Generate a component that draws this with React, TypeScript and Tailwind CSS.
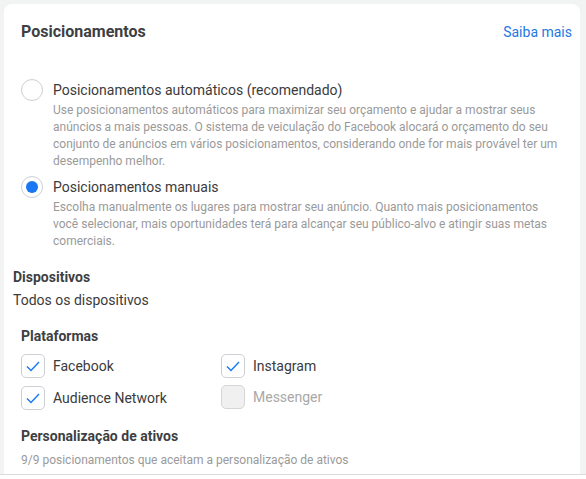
import { useState } from "react";

const platforms = [
  { name: "Facebook", checked: true, disabled: false },
  { name: "Instagram", checked: true, disabled: false },
  { name: "Audience Network", checked: true, disabled: false },
  { name: "Messenger", checked: false, disabled: true }
];

function Radio({ selected }: { selected: boolean }) {
  return (
    <span className="flex h-[22px] w-[22px] shrink-0 items-center justify-center rounded-full border border-[#ccd0d5] bg-white">
      {selected ? <span className="h-3 w-3 rounded-full bg-[#1877f2]" /> : null}
    </span>
  );
}

function Checkbox({ checked, disabled }: { checked: boolean; disabled: boolean }) {
  return (
    <span
      className={`flex h-6 w-6 shrink-0 items-center justify-center rounded-[5px] border ${
        disabled ? "border-[#d6d6d6] bg-[#f0f0f0]" : "border-[#ccd0d5] bg-white"
      }`}
    >
      {checked ? (
        <svg width="14" height="11" viewBox="0 0 14 11" fill="none">
          <path d="M1 5.5 L5 9.5 L13 1" stroke="#1877f2" strokeWidth="1.4" />
        </svg>
      ) : null}
    </span>
  );
}

export default function App() {
  const [placement, setPlacement] = useState("manual");

  const options = [
    {
      id: "auto",
      label: "Posicionamentos automáticos (recomendado)",
      text: "Use posicionamentos automáticos para maximizar seu orçamento e ajudar a mostrar seus anúncios a mais pessoas. O sistema de veiculação do Facebook alocará o orçamento do seu conjunto de anúncios em vários posicionamentos, considerando onde for mais provável ter um desempenho melhor."
    },
    {
      id: "manual",
      label: "Posicionamentos manuais",
      text: "Escolha manualmente os lugares para mostrar seu anúncio. Quanto mais posicionamentos você selecionar, mais oportunidades terá para alcançar seu público-alvo e atingir suas metas comerciais."
    }
  ];

  return (
    <div className="h-[479px] w-[586px] overflow-hidden bg-white font-['Roboto',sans-serif]">
      <div className="h-[475px] border-b border-[#dcdcdc] bg-[#f2f3f3] pl-1 pr-1.5 pt-1">
        <section className="h-full rounded-t-lg bg-white pl-[9px] pt-[17px]">
          <div className="flex items-center justify-between pl-2 pr-2">
            <h2 className="text-[16px] leading-[22px] font-bold text-[#3d3f43]">
              Posicionamentos
            </h2>
            <a className="text-[14px] leading-[22px] text-[#2577e3]" href="#">
              Saiba mais
            </a>
          </div>

          <div className="mt-[37px] flex flex-col gap-[7px] pl-2 pr-[18px]">
            {options.map((option) => (
              <div
                className="flex cursor-pointer gap-2.5"
                key={option.id}
                onClick={() => setPlacement(option.id)}
              >
                <div className="mt-[-1px]">
                  <Radio selected={placement === option.id} />
                </div>
                <div>
                  <p className="text-[14px] leading-5 text-[#3b3b3b]">
                    {option.label}
                  </p>
                  <p className="mt-0.5 text-[12px] leading-[17px] text-[#9a9a9a]">
                    {option.text}
                  </p>
                </div>
              </div>
            ))}
          </div>

          <div className="mt-[18px]">
            <h3 className="text-[14px] leading-[18px] font-bold text-[#3d3f43]">
              Dispositivos
            </h3>
            <p className="mt-1 text-[14px] leading-5 text-[#3b3b3b]">
              Todos os dispositivos
            </p>
          </div>

          <div className="mt-[17px] pl-2">
            <h3 className="text-[14px] leading-[18px] font-bold text-[#3d3f43]">
              Plataformas
            </h3>
            <div className="mt-[9px] grid grid-cols-[200px_200px] gap-y-2">
              {platforms.map((item) => (
                <label
                  className={`flex items-center gap-2 ${item.disabled ? "-mt-0.5" : ""}`}
                  key={item.name}
                >
                  <Checkbox checked={item.checked} disabled={item.disabled} />
                  <span
                    className={`text-[14px] leading-5 ${
                      item.disabled ? "text-[#a8a8a8]" : "text-[#3b3b3b]"
                    }`}
                  >
                    {item.name}
                  </span>
                </label>
              ))}
            </div>

            <h3 className="mt-[17px] text-[14px] leading-[18px] font-bold text-[#3d3f43]">
              Personalização de ativos
            </h3>
            <p className="mt-[7px] text-[12px] leading-[17px] text-[#9a9a9a]">
              9/9 posicionamentos que aceitam a personalização de ativos
            </p>
          </div>
        </section>
      </div>
    </div>
  );
}
